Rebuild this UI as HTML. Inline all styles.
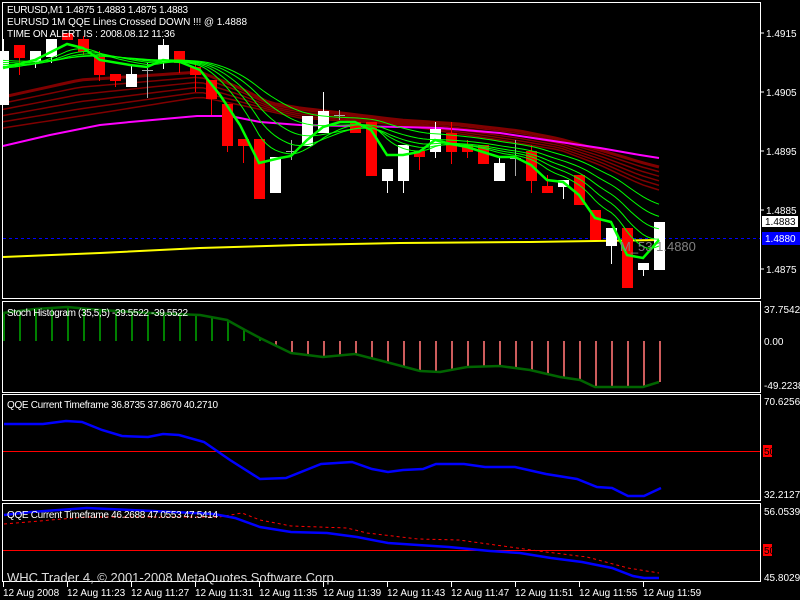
<!DOCTYPE html><html><head><style>
body{margin:0;background:#000;width:800px;height:600px;overflow:hidden;position:relative;font-family:"Liberation Sans",sans-serif;}
svg{position:absolute;left:0;top:0}
</style></head><body>
<svg id="s" width="800" height="600" xmlns="http://www.w3.org/2000/svg" font-family="Liberation Sans, sans-serif">
<rect width="800" height="600" fill="#000"/>
<g fill="none" stroke="#fff" stroke-width="1">
<rect x="2.5" y="2.5" width="758" height="296"/>
<rect x="2.5" y="301.5" width="758" height="91"/>
<rect x="2.5" y="394.5" width="758" height="106"/>
<rect x="2.5" y="503.5" width="758" height="78"/>
</g>
<g id="g"></g>
<g fill="#fff" font-size="10">
<text x="7" y="13" textLength="181">EURUSD,M1  1.4875 1.4883 1.4875 1.4883</text>
<text x="7" y="25" textLength="240">EURUSD 1M   QQE Lines Crossed DOWN !!!   @    1.4888</text>
<text x="7" y="37" textLength="168">TIME ON ALERT IS : 2008.08.12 11:36</text>
<text x="7" y="316" font-size="10" textLength="181">Stoch Histogram (35,5,5) -39.5522 -39.5522</text>
<text x="7" y="408" font-size="10" textLength="211">QQE Current Timeframe 36.8735 37.8670 40.2710</text>
<text x="7" y="518" font-size="10" textLength="211">QQE Current Timeframe 46.2688 47.0553 47.5414</text>
<text x="7" y="582" font-size="13" fill="#ddd">WHC Trader 4, © 2001-2008 MetaQuotes Software Corp.</text>
</g>
<g fill="#fff" font-size="10">
<text x="766" y="37">1.4915</text><text x="766" y="96">1.4905</text><text x="766" y="155">1.4895</text><text x="766" y="214">1.4885</text><text x="766" y="273">1.4875</text>
<text x="764" y="313">37.7542</text><text x="764" y="345">0.00</text><text x="764" y="389">-49.2238</text>
<text x="764" y="405">70.6256</text><text x="764" y="498">32.2127</text>
<text x="764" y="515">56.0539</text><text x="764" y="581">45.8029</text>
</g>
<g stroke="#fff"><line x1="761" y1="33" x2="764" y2="33"/><line x1="761" y1="92" x2="764" y2="92"/><line x1="761" y1="151" x2="764" y2="151"/><line x1="761" y1="210" x2="764" y2="210"/><line x1="761" y1="269" x2="764" y2="269"/></g>
<rect x="762" y="216" width="36" height="11" fill="#fff"/><text x="765" y="225" font-size="10" fill="#000">1.4883</text>
<rect x="762" y="232" width="38" height="13" fill="#00f"/><text x="765" y="242" font-size="10" fill="#fff">1.4880</text>
<text x="620" y="251" font-size="13" fill="#808080">M_53 1.4880</text>
<rect x="763" y="445" width="9" height="12" fill="#f00"/><text x="764" y="455" font-size="10" fill="#000">50</text>
<rect x="763" y="544" width="9" height="12" fill="#f00"/><text x="764" y="554" font-size="10" fill="#000">50</text>
<g fill="#fff" font-size="10" id="ax"></g>
</svg>
<script>
var NS="http://www.w3.org/2000/svg",g=document.getElementById('g');
function el(t,a){var e=document.createElementNS(NS,t);for(var k in a)e.setAttribute(k,a[k]);g.appendChild(e);return e;}
function pl(pts,c,w,d){var a={points:pts.map(function(p){return p.join(',')}).join(' '),fill:'none',stroke:c,'stroke-width':w};if(d)a['stroke-dasharray']=d;el('polyline',a);}
function interp(pts,x){for(var i=0;i<pts.length-1;i++){if(x>=pts[i][0]&&x<=pts[i+1][0]){var t=(x-pts[i][0])/(pts[i+1][0]-pts[i][0]);return pts[i][1]+t*(pts[i+1][1]-pts[i][1]);}}return pts[pts.length-1][1];}
pl([[3,257],[100,253],[200,248],[300,245],[400,243],[530,242],[659,240]],'#ff0',2);
el('line',{x1:3,y1:238.5,x2:760,y2:238.5,stroke:'#00f','stroke-dasharray':'3,3'});
var topR=[[3,97],[80,80],[200,72],[240,88],[270,103],[300,108],[400,120],[460,124],[520,131],[560,139],[600,150],[640,162],[659,167]];
var botR=[[3,128],[100,113],[200,97],[240,105],[300,118],[400,125],[500,140],[560,150],[600,165],[640,184],[659,190]];
var xs=[];for(var x=3;x<=659;x+=8)xs.push(x);
for(var k=0;k<6;k++){var t=k/5;pl(xs.map(function(x){return [x,interp(topR,x)*(1-t)+interp(botR,x)*t]}),'#800000',k==0?3:1.5);}
pl([[3,146],[50,135],[100,125],[130,122],[197,116],[230,116],[260,122],[300,125],[400,127],[440,128],[500,133],[560,142],[600,148],[640,155],[659,158]],'#f0f',2);
var C=[[51,105,39,105,1],[45,58,45,75,0],[51,62,51,68,1],[39,57,39,63,1],[33,40,33,40,0],[39,52,36,55,0],[57,75,51,81,0],[74,81,74,87,0],[74,87,66,87,1],[70,70,62,98,2],[45,62,39,69,1],[51,63,51,73,0],[67,75,62,92,0],[80,99,80,115,0],[104,146,104,152,0],[139,146,139,163,0],[139,199,139,199,0],[157,193,157,193,1],[151,151,140,160,2],[116,146,116,146,1],[111,133,92,133,1],[115,115,110,120,2],[122,133,122,133,0],[122,176,122,176,0],[169,181,169,193,1],[145,181,145,193,1],[151,157,151,170,0],[129,152,122,158,1],[133,152,122,164,0],[145,152,140,158,0],[145,164,145,164,0],[163,181,157,181,1],[158,158,140,176,2],[151,181,145,193,0],[186,193,175,193,0],[180,187,180,199,1],[175,205,175,205,0],[210,240,210,240,0],[228,246,228,264,1],[228,288,228,288,0],[263,270,263,276,1],[222,270,222,270,1]];
C.forEach(function(c,i){var x=3+16*i;var col=c[4]==0?'#f00':(c[4]==1?'#fff':'#aaa');
el('line',{x1:x+.5,y1:c[2],x2:x+.5,y2:c[3],stroke:col});
if(c[4]==2)el('line',{x1:x-5,y1:c[0]+.5,x2:x+6,y2:c[0]+.5,stroke:col});else el('rect',{x:x-5,y:c[0],width:11,height:Math.max(1,c[1]-c[0]),fill:col});});
var G=[[3,68],[35,60],[67,44],[83,48],[100,60],[130,65],[147,67],[163,60],[180,62],[200,70],[220,95],[240,125],[259,163],[280,158],[291,156],[307,140],[323,127],[340,122],[355,122],[371,130],[387,155],[403,155],[419,152],[435,140],[451,144],[467,147],[483,152],[499,157],[515,157],[531,165],[547,180],[563,182],[579,195],[595,218],[611,222],[627,255],[643,258],[659,240]];
var gx=[];for(var x=3;x<=659;x+=4)gx.push(x);var base=gx.map(function(x){return interp(G,x)});
[0.2,0.12,0.08,0.055,0.04].forEach(function(a,j){var e=base[0]-2*j,r=[];for(var i=0;i<gx.length;i++){e=e+a*(base[i]-e);r.push([gx[i],e]);}pl(r,'#0f0',1);});
pl(G,'#0f0',2.5);
var S=[[3,313],[35,309],[67,307],[100,310],[150,313],[200,315],[227,320],[245,330],[260,338],[291,353],[323,357],[355,354],[390,363],[420,371],[440,372],[467,367],[500,366],[530,370],[560,377],[580,380],[595,387],[620,387],[643,387],[659,382]];
for(var i=0;i<42;i++){var x=4+16*i,y=interp(S,x);if(y<341)el('line',{x1:x,y1:y,x2:x,y2:341,stroke:'#008000','stroke-width':2});else el('line',{x1:x,y1:341,x2:x,y2:y,stroke:'#cd5c5c','stroke-width':2});}
pl(S,'#006400',2.5);
el('line',{x1:3,y1:451.5,x2:760,y2:451.5,stroke:'#f00'});
pl([[4,424],[43,424],[66,421],[82,422],[102,430],[122,436],[148,437],[163,434],[179,435],[204,442],[230,460],[260,479],[286,478],[321,464],[352,462],[372,469],[388,472],[403,470],[423,469],[436,464],[464,464],[485,467],[515,467],[546,474],[577,479],[597,487],[612,488],[628,496],[644,496],[661,488]],'#00f',2.5);
el('line',{x1:3,y1:550.5,x2:760,y2:550.5,stroke:'#f00'});
pl([[4,524],[51,520],[87,517],[219,517],[242,513],[260,520],[291,526],[347,528],[367,533],[418,539],[459,540],[510,547],[546,552],[587,557],[628,568],[659,573]],'#f00',1,'3,3');
pl([[4,515],[31,512],[87,508],[153,511],[214,514],[235,518],[260,527],[291,532],[327,533],[357,537],[388,543],[418,545],[449,547],[490,551],[520,553],[551,558],[582,562],[612,568],[633,576],[644,578],[659,578]],'#00f',2.5);
var ax=document.getElementById('ax');var L=['12 Aug 2008','12 Aug 11:23','12 Aug 11:27','12 Aug 11:31','12 Aug 11:35','12 Aug 11:39','12 Aug 11:43','12 Aug 11:47','12 Aug 11:51','12 Aug 11:55','12 Aug 11:59'];
L.forEach(function(s,i){var x=3+64*i;var t=document.createElementNS(NS,'text');t.setAttribute('x',x);t.setAttribute('y',596);t.textContent=s;ax.appendChild(t);el('line',{x1:x+.5,y1:582,x2:x+.5,y2:587,stroke:'#fff'});});
</script>
</body></html>
